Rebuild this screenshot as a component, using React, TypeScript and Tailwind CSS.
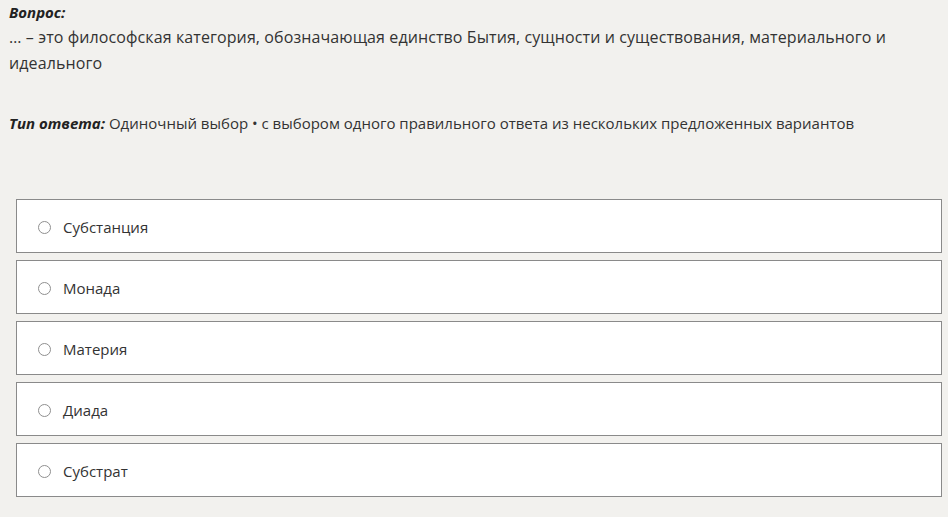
import React from 'react';

const OPTIONS = ['Субстанция', 'Монада', 'Материя', 'Диада', 'Субстрат'];

export default function App() {
  return (
    <div
      className="min-h-screen w-full bg-[#f2f1ee] text-[#333] text-[15px] leading-[25px]"
      style={{ fontFamily: "'Open Sans', 'Liberation Sans', sans-serif" }}
    >
      {/* Question */}
      <div className="pl-[9px] pr-[6px] text-[16px] leading-[25px]">
        <div className="font-bold italic text-[#222] text-[15px]">Вопрос:</div>
        <div className="-mt-px leading-[26px] tracking-[0.1px]">
          … – это философская категория, обозначающая единство Бытия, сущности и существования, материального и идеального
        </div>
      </div>

      {/* Answer type */}
      <div className="pl-[9px] mt-[35px]">
        <span className="font-bold italic text-[#222]">Тип ответа:</span>{' '}
        Одиночный выбор • с выбором одного правильного ответа из нескольких предложенных вариантов
      </div>

      {/* Options */}
      <div className="ml-[16px] mr-[6px] mt-[63px] flex flex-col gap-[7px]">
        {OPTIONS.map(opt => (
          <label
            key={opt}
            className="h-[54px] bg-white border border-[#8a8a8a] flex items-center pl-[21px] pt-[3px] gap-[12px] cursor-pointer"
          >
            <span className="w-[13px] h-[13px] rounded-full border border-[#8f8f8f] bg-white shrink-0" />
            <span>{opt}</span>
          </label>
        ))}
      </div>
    </div>
  );
}
